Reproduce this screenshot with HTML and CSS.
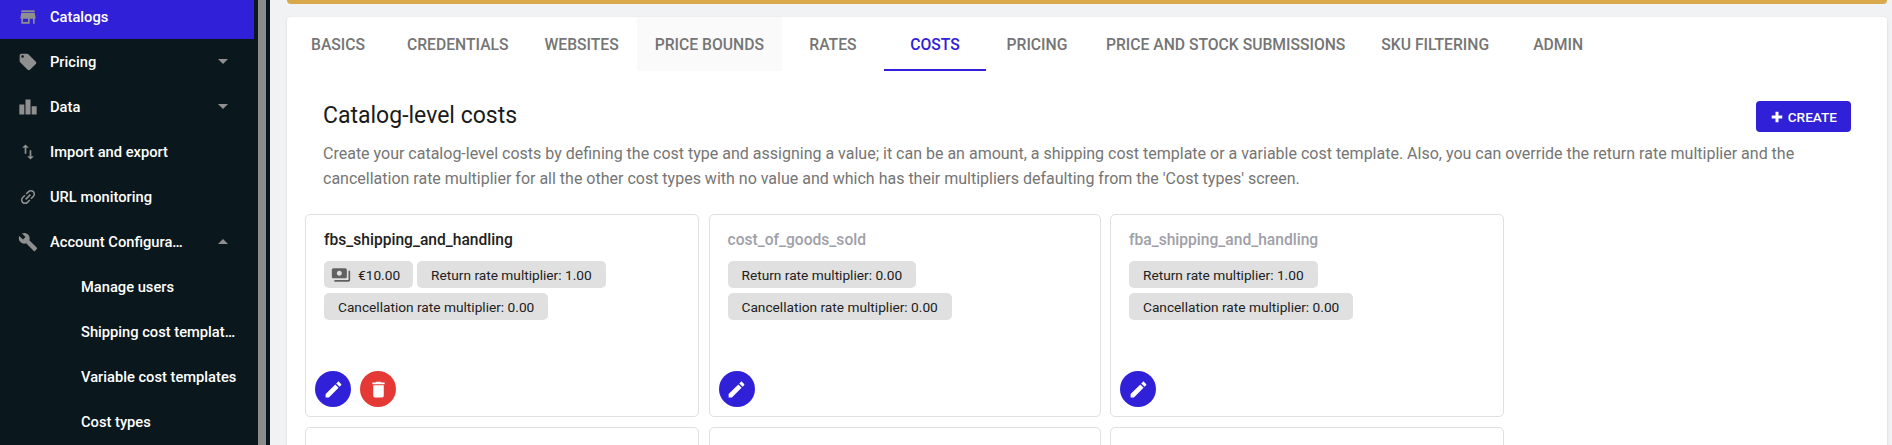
FILE: index.html
```html
<!DOCTYPE html>
<html lang="en">
<head>
    <meta charset="UTF-8" />
    <title>Catalog-level costs</title>
    <link rel="stylesheet" href="styles.css">
</head>
<body>
<div class="app">
    <nav class="sidebar">
        <a class="nav-item active">
            <svg class="nav-icon" viewBox="0 0 24 24"><path d="M20 4H4v2h16V4zm1 10v-2l-1-5H4l-1 5v2h1v6h10v-6h4v6h2v-6h1zm-9 4H6v-4h6v4z"/></svg>
            <span class="nav-label">Catalogs</span>
        </a>
        <a class="nav-item">
            <svg class="nav-icon" viewBox="0 0 24 24"><path d="M21.41 11.58l-9-9C12.05 2.22 11.55 2 11 2H4c-1.1 0-2 .9-2 2v7c0 .55.22 1.05.59 1.42l9 9c.36.36.86.58 1.41.58.55 0 1.05-.22 1.41-.59l7-7c.37-.36.59-.86.59-1.41 0-.55-.23-1.06-.59-1.42zM5.5 7C4.67 7 4 6.33 4 5.5S4.67 4 5.5 4 7 4.67 7 5.5 6.33 7 5.5 7z"/></svg>
            <span class="nav-label">Pricing</span>
            <span class="caret"></span>
        </a>
        <a class="nav-item">
            <svg class="nav-icon" viewBox="0 0 24 24"><path d="M1.6 9h6v12h-6zM9 3h6v18H9zM16.4 11h6v10h-6z"/></svg>
            <span class="nav-label">Data</span>
            <span class="caret"></span>
        </a>
        <a class="nav-item">
            <svg class="nav-icon" viewBox="0 0 24 24"><path d="M16 17.01V10h-2v7.01h-3L15 21l4-3.99h-3zM9 3L5 6.99h3V14h2V6.99h3L9 3z"/></svg>
            <span class="nav-label">Import and export</span>
        </a>
        <a class="nav-item">
            <svg class="nav-icon" viewBox="0 0 24 24"><path d="M3.9 12c0-1.71 1.39-3.1 3.1-3.1h4V7H7c-2.76 0-5 2.24-5 5s2.24 5 5 5h4v-1.9H7c-1.71 0-3.1-1.39-3.1-3.1zM8 13h8v-2H8v2zm9-6h-4v1.9h4c1.71 0 3.1 1.39 3.1 3.1s-1.39 3.1-3.1 3.1h-4V17h4c2.76 0 5-2.24 5-5s-2.24-5-5-5z" transform="rotate(-45 12 12)"/></svg>
            <span class="nav-label">URL monitoring</span>
        </a>
        <a class="nav-item">
            <svg class="nav-icon" viewBox="0 0 24 24"><path d="M22.7 19l-9.1-9.1c.9-2.3.4-5-1.5-6.9-2-2-5-2.4-7.4-1.3L9 6 6 9 1.6 4.7C.4 7.1.9 10.1 2.9 12.1c1.9 1.9 4.6 2.4 6.9 1.5l9.1 9.1c.4.4 1 .4 1.4 0l2.3-2.3c.5-.4.5-1.1.1-1.4z"/></svg>
            <span class="nav-label trunc">Account Configuration</span>
            <span class="caret up"></span>
        </a>
        <a class="nav-item sub"><span class="nav-label">Manage users</span></a>
        <a class="nav-item sub"><span class="nav-label trunc">Shipping cost templates</span></a>
        <a class="nav-item sub"><span class="nav-label">Variable cost templates</span></a>
        <a class="nav-item sub"><span class="nav-label">Cost types</span></a>
    </nav>
    <div class="scroll-track"><div class="scroll-thumb"></div></div>

    <main class="main">
        <div class="banner"></div>
        <section class="panel">
            <div class="tabs">
                <a class="tab">Basics</a>
                <a class="tab">Credentials</a>
                <a class="tab">Websites</a>
                <a class="tab hover">Price bounds</a>
                <a class="tab">Rates</a>
                <a class="tab selected">Costs</a>
                <a class="tab">Pricing</a>
                <a class="tab">Price and stock submissions</a>
                <a class="tab">SKU filtering</a>
                <a class="tab">Admin</a>
            </div>
            <div class="panel-body">
                <div class="title-row">
                    <h2 class="page-title">Catalog-level costs</h2>
                    <button class="create-btn">
                        <svg viewBox="0 0 24 24"><path d="M10 5h4v5h5v4h-5v5h-4v-5H5v-4h5z"/></svg>
                        Create
                    </button>
                </div>
                <p class="intro">Create your catalog-level costs by defining the cost type and assigning a value; it can be an amount, a shipping cost template or a variable cost template. Also, you can override the return rate multiplier and the cancellation rate multiplier for all the other cost types with no value and which has their multipliers defaulting from the 'Cost types' screen.</p>
            </div>
            <div class="cost-grid">
                <article class="cost-card">
                    <h3 class="cost-name">fbs_shipping_and_handling</h3>
                    <div class="chips">
                        <span class="chip icon-chip">
                            <svg viewBox="0 0 24 24"><path d="M19 14V6c0-1.1-.9-2-2-2H3c-1.1 0-2 .9-2 2v8c0 1.1.9 2 2 2h14c1.1 0 2-.9 2-2zm-9-1c-1.66 0-3-1.34-3-3s1.34-3 3-3 3 1.34 3 3-1.34 3-3 3zm13-6v11c0 1.1-.9 2-2 2H4v-2h17V7h2z"/></svg>
                            €10.00
                        </span>
                        <span class="chip">Return rate multiplier: 1.00</span>
                        <span class="chip">Cancellation rate multiplier: 0.00</span>
                    </div>
                    <div class="card-actions">
                        <button class="fab"><svg viewBox="0 0 24 24"><path d="M3 17.25V21h3.75L17.81 9.94l-3.75-3.75L3 17.25zM20.71 7.04c.39-.39.39-1.02 0-1.41l-2.34-2.34c-.39-.39-1.02-.39-1.41 0l-1.83 1.83 3.75 3.75 1.83-1.83z"/></svg></button>
                        <button class="fab danger"><svg viewBox="0 0 24 24"><path d="M6 19c0 1.1.9 2 2 2h8c1.1 0 2-.9 2-2V7H6v12zM19 4h-3.5l-1-1h-5l-1 1H5v2h14V4z"/></svg></button>
                    </div>
                </article>
                <article class="cost-card">
                    <h3 class="cost-name muted">cost_of_goods_sold</h3>
                    <div class="chips">
                        <span class="chip">Return rate multiplier: 0.00</span>
                        <span class="chip">Cancellation rate multiplier: 0.00</span>
                    </div>
                    <div class="card-actions">
                        <button class="fab"><svg viewBox="0 0 24 24"><path d="M3 17.25V21h3.75L17.81 9.94l-3.75-3.75L3 17.25zM20.71 7.04c.39-.39.39-1.02 0-1.41l-2.34-2.34c-.39-.39-1.02-.39-1.41 0l-1.83 1.83 3.75 3.75 1.83-1.83z"/></svg></button>
                    </div>
                </article>
                <article class="cost-card">
                    <h3 class="cost-name muted">fba_shipping_and_handling</h3>
                    <div class="chips">
                        <span class="chip">Return rate multiplier: 1.00</span>
                        <span class="chip">Cancellation rate multiplier: 0.00</span>
                    </div>
                    <div class="card-actions">
                        <button class="fab"><svg viewBox="0 0 24 24"><path d="M3 17.25V21h3.75L17.81 9.94l-3.75-3.75L3 17.25zM20.71 7.04c.39-.39.39-1.02 0-1.41l-2.34-2.34c-.39-.39-1.02-.39-1.41 0l-1.83 1.83 3.75 3.75 1.83-1.83z"/></svg></button>
                    </div>
                </article>
                <article class="cost-card"><h3 class="cost-name muted">marketplace_commission</h3></article>
                <article class="cost-card"><h3 class="cost-name muted">marketplace_commission_fbs</h3></article>
                <article class="cost-card"><h3 class="cost-name muted">marketplace_commission_fba</h3></article>
            </div>
        </section>
    </main>
</div>
</body>
</html>
```

FILE: styles.css
```css
html, body {
    margin: 0;
    height: 445px;
    overflow: hidden;
}

body {
    font-family: Roboto, sans-serif;
    background: #f1f2f4;
}

.app {
    display: flex;
    height: 445px;
    overflow: hidden;
}

/* Sidebar */
.sidebar {
    width: 258px;
    flex: none;
    background: #0a171c;
    margin-top: -6px;
    padding-right: 4px;
    box-sizing: border-box;
}

.nav-item {
    display: flex;
    align-items: center;
    height: 45px;
    padding-left: 18px;
    color: #fff;
    font-size: 14.7px;
    font-weight: 500;
    box-sizing: border-box;
}

.nav-item.active {
    background: #3020d8;
}

.nav-item.sub {
    padding-left: 81px;
}

.nav-icon {
    width: 20px;
    height: 20px;
    flex: none;
    margin-right: 12px;
    fill: #8f8f8f;
}

.nav-label {
    white-space: nowrap;
}

.nav-label.trunc {
    overflow: hidden;
    text-overflow: ellipsis;
    max-width: 133px;
}

.nav-item.sub .nav-label.trunc {
    max-width: 155px;
}

.caret {
    margin-left: auto;
    margin-right: 26px;
    border-left: 5.5px solid transparent;
    border-right: 5.5px solid transparent;
    border-top: 5.5px solid #8f8f8f;
}

.caret.up {
    border-top: 0;
    border-bottom: 5.5px solid #8f8f8f;
}

.scroll-track {
    width: 12px;
    flex: none;
    background: #0a171c;
}

.scroll-thumb {
    width: 8px;
    height: 100%;
    background: #8c8c8c;
}

/* Main area */
.main {
    flex: 1;
    min-width: 0;
    padding: 0 5px 0 17px;
}

.banner {
    height: 4px;
    background: #d9a94b;
    border-radius: 0 0 4px 4px;
    margin-bottom: 13px;
}

.panel {
    background: #fff;
    border-radius: 4px;
    box-shadow: 0 1px 3px rgba(0, 0, 0, 0.12);
    height: 500px;
}

.tabs {
    display: flex;
}

.tab {
    display: flex;
    align-items: center;
    justify-content: center;
    min-width: 102px;
    height: 54px;
    padding: 0 18px;
    font-size: 15.7px;
    font-weight: 500;
    color: #757575;
    text-transform: uppercase;
    box-sizing: border-box;
}

.tab.hover {
    background: #fafafa;
}

.tab.selected {
    color: #3020d8;
    padding-top: 2px;
    border-bottom: 2px solid #3020d8;
}

.panel-body {
    padding: 0 36px;
}

.title-row {
    display: flex;
    justify-content: space-between;
    align-items: center;
    margin-top: 30px;
}

.page-title {
    margin: 0;
    padding-bottom: 3px;
    font-size: 23px;
    font-weight: 400;
    color: #1a1a1a;
}

.create-btn {
    display: flex;
    align-items: center;
    gap: 2px;
    height: 31px;
    padding: 0 14px 0 12px;
    border: 0;
    border-radius: 4px;
    background: #3020d8;
    color: #fff;
    font-family: inherit;
    font-size: 13.6px;
    font-weight: 500;
    text-transform: uppercase;
}

.create-btn svg {
    width: 18px;
    height: 18px;
    fill: #fff;
}

.intro {
    margin: 9px 0 0;
    font-size: 16px;
    line-height: 25px;
    color: #757575;
}

.cost-grid {
    display: grid;
    grid-template-columns: 394px 392px 394px;
    gap: 10px 9.5px;
    padding: 23px 0 0 18px;
}

.cost-card {
    display: flex;
    flex-direction: column;
    height: 203px;
    border: 1px solid #e0e0e0;
    border-radius: 5px;
    box-sizing: border-box;
    padding: 16px 9px 9px;
}

.cost-name {
    margin: 0 0 12px 9px;
    font-size: 15.6px;
    line-height: 18px;
    font-weight: 500;
    color: #212121;
}

.cost-name.muted {
    color: #a0a0a8;
}

.chips {
    display: flex;
    flex-wrap: wrap;
    gap: 5px 4px;
    margin-left: 9px;
}

.chip {
    display: flex;
    align-items: center;
    height: 27px;
    padding: 0 14px;
    border-radius: 5px;
    background: #e0e0e0;
    color: #212121;
    font-size: 13.7px;
}

.chip.icon-chip {
    padding: 0 13px 0 7px;
}

.chip svg {
    width: 20px;
    height: 20px;
    margin-right: 7px;
    fill: #616161;
}

.card-actions {
    display: flex;
    gap: 9px;
    margin-top: auto;
}

.fab {
    display: flex;
    align-items: center;
    justify-content: center;
    width: 36px;
    height: 36px;
    padding: 0;
    border: 0;
    border-radius: 50%;
    background: #3020d8;
}

.fab.danger {
    background: #e53935;
}

.fab svg {
    width: 21px;
    height: 21px;
    fill: #fff;
}
```
